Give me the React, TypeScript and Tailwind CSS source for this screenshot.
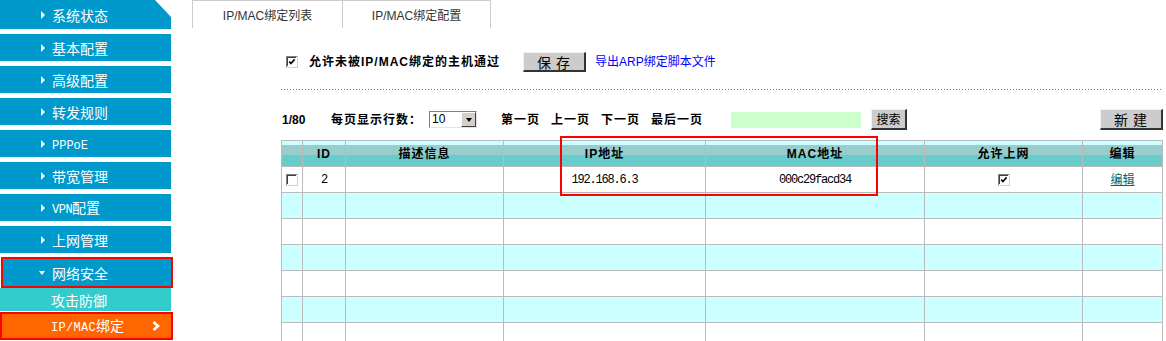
import React from "react";

function Arrow() {
  return (
    <span className="inline-block w-0 h-0 border-y-[4px] border-y-transparent border-l-[4px] border-l-white" />
  );
}

function Checkbox({ checked }: { checked?: boolean }) {
  return (
    <svg width="12" height="12" viewBox="0 0 12 12" className="block">
      <rect x="0" y="0" width="12" height="12" fill="#d4d0c8" />
      <rect x="0" y="0" width="11" height="11" fill="#808080" />
      <rect x="1" y="1" width="10" height="10" fill="#ffffff" />
      <rect x="1" y="1" width="9" height="9" fill="#404040" />
      <rect x="2" y="2" width="8" height="8" fill="#ffffff" />
      {checked && (
        <path d="M3.2 5.6 L4.9 7.6 L8.6 3.4" fill="none" stroke="#000" strokeWidth="1.6" />
      )}
    </svg>
  );
}

const sideItems = ["系统状态", "基本配置", "高级配置", "转发规则", "PPPoE", "带宽管理", "VPN配置", "上网管理"];

function SideLabel({ text }: { text: string }) {
  if (text === "PPPoE") {
    return <span className="font-['Liberation_Mono',monospace] text-[12px]">PPPoE</span>;
  }
  if (text === "VPN配置") {
    return (
      <span>
        <span className="font-['Liberation_Mono',monospace] text-[12px] tracking-[-0.5px]">VPN</span>配置
      </span>
    );
  }
  return <span>{text}</span>;
}

function Sidebar() {
  return (
    <div className="w-[173px] shrink-0 flex flex-col font-['Noto_Sans_CJK_SC',sans-serif] text-[14px] text-white leading-none">
      {sideItems.map((t, i) => (
        <div
          key={t}
          className={
            i === 0
              ? "shrink-0 w-[171px] h-[29px] bg-[#0099cc] flex items-center pl-[41px] [clip-path:polygon(0_0,155px_0,100%_17px,100%_100%,0_100%)]"
              : "shrink-0 w-[171px] h-[27px] mt-[5px] bg-[#0099cc] flex items-center pl-[41px]"
          }
        >
          <Arrow />
          <span className="ml-[7px]">
            <SideLabel text={t} />
          </span>
        </div>
      ))}
      <div className="shrink-0 w-[172px] h-[31px] mt-[4px] ml-[1px] bg-[#0099cc] border-2 border-[#ff0000] flex items-center pl-[36px]">
        <span className="inline-block w-0 h-0 border-x-[3px] border-x-transparent border-t-[4px] border-t-white" />
        <span className="ml-[7px]">网络安全</span>
      </div>
      <div className="shrink-0 w-[171px] h-[23px] bg-[#33cccc] flex items-center pl-[51px]">攻击防御</div>
      <div className="shrink-0 w-[173px] h-[28px] mt-[1px] bg-[#ff6600] border-2 border-[#ff0000] flex items-center pl-[49px] pr-[10px]">
        <span>
          <span className="font-['Liberation_Mono',monospace] text-[12px] tracking-[0.3px]">IP/MAC</span>绑定
        </span>
        <svg width="10" height="10" viewBox="0 0 10 10" className="ml-auto">
          <path d="M2.5 1 L7 5 L2.5 9" fill="none" stroke="#fff" strokeWidth="2.6" />
        </svg>
      </div>
    </div>
  );
}

function Btn({ children, className }: { children: React.ReactNode; className: string }) {
  return (
    <div
      className={
        "shrink-0 bg-[#cccccc] border-t border-l border-r-2 border-b-2 border-t-[#f2f2f2] border-l-[#f2f2f2] border-r-[#333333] border-b-[#333333] flex items-center justify-center text-black font-['Noto_Sans_CJK_SC',sans-serif] leading-none " +
        className
      }
    >
      {children}
    </div>
  );
}

const cols = "grid grid-cols-[21px_43px_158px_202px_219px_158px_80px]";

function Main() {
  const rows = [0, 1, 2, 3, 4, 5, 6, 7];
  return (
    <div className="flex-1 min-w-0 h-[341px] overflow-hidden">
      <div className="flex pl-[19px] h-[28px] text-[12px] text-[#333333]">
        <div className="w-[151px] h-full border-l border-t border-r border-[#cccccc] flex items-center justify-center pt-[3px]">
          IP/MAC绑定列表
        </div>
        <div className="w-[148px] h-full border-t border-r border-[#cccccc] flex items-center justify-center pt-[3px]">
          IP/MAC绑定配置
        </div>
      </div>

      <div className="pl-[108px] pr-[3px]">
        <div className="mt-[24px] h-[20px] flex items-center">
          <div className="ml-[5px]">
            <Checkbox checked />
          </div>
          <div className="ml-[11px] w-[214px] shrink-0 font-bold tracking-[1px] text-[12px] whitespace-nowrap">
            允许未被IP/MAC绑定的主机通过
          </div>
          <Btn className="w-[63px] h-[20px] text-[14px] tracking-[5px] pl-[4px]">保存</Btn>
          <a className="ml-[9px] text-[#0000ff] text-[12px] whitespace-nowrap">导出ARP绑定脚本文件</a>
        </div>

        <div className="mt-[17px] h-px bg-[repeating-linear-gradient(90deg,#339999_0_1px,transparent_1px_3px)]" />

        <div className="mt-[19px] h-[21px] flex items-center text-[12px] font-bold whitespace-nowrap">
          <div className="ml-[1px] w-[49px] shrink-0">1/80</div>
          <div className="w-[98px] shrink-0 tracking-[1px]">每页显示行数：</div>
          <div className="w-[48px] h-[17px] shrink-0 flex border border-t-[#808080] border-l-[#808080] border-b-[#e4e4e4] border-r-[#e4e4e4] bg-white font-normal">
            <span className="flex-1 pl-[2px] leading-[15px] text-[12px]">10</span>
            <span className="w-[15px] h-full bg-[#d4d0c8] border border-t-white border-l-white border-b-[#404040] border-r-[#404040] flex items-center justify-center">
              <span className="w-0 h-0 border-x-[3.5px] border-x-transparent border-t-[4px] border-t-black" />
            </span>
          </div>
          <div className="ml-[24px] w-[50px] shrink-0 tracking-[1px]">第一页</div>
          <div className="w-[50px] shrink-0 tracking-[1px]">上一页</div>
          <div className="w-[50px] shrink-0 tracking-[1px]">下一页</div>
          <div className="w-[80px] shrink-0 tracking-[1px]">最后一页</div>
          <div className="w-[130px] h-[16px] shrink-0 bg-[#ccffcc]" />
          <Btn className="ml-[10px] w-[36px] h-[21px] text-[12px] font-normal">搜索</Btn>
          <Btn className="ml-auto w-[63px] h-[21px] text-[14px] font-normal tracking-[5px] pl-[4px]">新建</Btn>
        </div>

        <div className="relative mt-[10px]">
          <div className="border-l border-t border-[#bbbbbb]">
            <div className={cols + " h-[26px] font-bold text-[12px] tracking-[1px]"}>
              {["", "ID", "描述信息", "IP地址", "MAC地址", "允许上网", "编辑"].map((h, i) => (
                <div
                  key={i}
                  className="border-r border-b border-[#bbbbbb] bg-[linear-gradient(#ccffff_0_4px,#99cccc_4px_14px,#66cccc_14px)] flex items-center justify-center"
                >
                  {h}
                </div>
              ))}
            </div>
            {rows.map((r) => {
              const bg = r % 2 === 1 ? "bg-[#ccffff]" : "bg-white";
              const cell = "border-r border-b border-[#bbbbbb] flex items-center justify-center " + bg;
              if (r === 0) {
                return (
                  <div key={r} className={cols + " h-[26px] text-[12px]"}>
                    <div className={cell}>
                      <Checkbox />
                    </div>
                    <div className={cell + " font-['Liberation_Mono',monospace] tracking-[-1.2px]"}>2</div>
                    <div className={cell} />
                    <div className={cell + " font-['Liberation_Mono',monospace] tracking-[-1.2px]"}>192.168.6.3</div>
                    <div className={cell + " font-['Liberation_Mono',monospace] tracking-[-1.2px]"}>000c29facd34</div>
                    <div className={cell}>
                      <Checkbox checked />
                    </div>
                    <div className={cell}>
                      <a className="text-[#006666] underline">编辑</a>
                    </div>
                  </div>
                );
              }
              return (
                <div key={r} className={cols + " h-[26px]"}>
                  {[0, 1, 2, 3, 4, 5, 6].map((c) => (
                    <div key={c} className={cell} />
                  ))}
                </div>
              );
            })}
          </div>
          <div className="absolute left-[279px] top-[-4px] w-[318px] h-[60px] border-2 border-[#ff0000]" />
        </div>
      </div>
    </div>
  );
}

export default function App() {
  return (
    <div className="flex w-[1166px] h-[341px] overflow-hidden bg-white font-['Liberation_Sans','Noto_Sans_CJK_SC',sans-serif] text-[12px] text-black">
      <Sidebar />
      <Main />
    </div>
  );
}
